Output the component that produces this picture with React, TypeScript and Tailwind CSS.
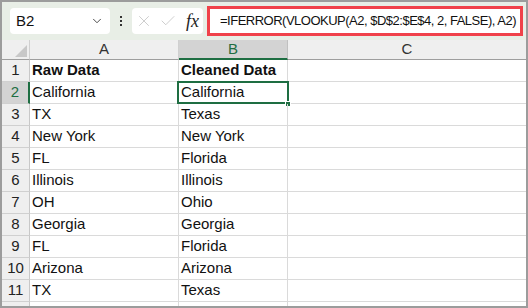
import { ChevronDown, X, Check } from 'lucide-react';

const rows = [
  ['Raw Data', 'Cleaned Data'],
  ['California', 'California'],
  ['TX', 'Texas'],
  ['New York', 'New York'],
  ['FL', 'Florida'],
  ['Illinois', 'Illinois'],
  ['OH', 'Ohio'],
  ['Georgia', 'Georgia'],
  ['FL', 'Florida'],
  ['Arizona', 'Arizona'],
  ['TX', 'Texas'],
  ['', ''],
];

const App = () => {
  return (
    <div
      className="w-[528px] h-[308px] overflow-hidden border-2 border-[#9c9c9c] bg-white text-[#111]"
      style={{ fontFamily: '"Liberation Sans", Arial, sans-serif' }}
    >
      {/* Formula bar */}
      <div className="h-[38px] bg-[#e8eee6] flex items-center pl-2 pr-[3px]">
        <div className="w-[100px] shrink-0 h-[26px] bg-white rounded-[4px] flex items-center justify-between pl-[6px] pr-[6px] text-[15px]">
          <span>B2</span>
          <ChevronDown size={14} strokeWidth={1.5} className="text-[#333]" />
        </div>
        <div className="w-[22px] shrink-0 flex flex-col items-center gap-[2px]">
          <span className="w-[2px] h-[2px] bg-[#333]" />
          <span className="w-[2px] h-[2px] bg-[#333]" />
          <span className="w-[2px] h-[2px] bg-[#333]" />
        </div>
        <div className="w-[71px] shrink-0 h-[26px] bg-white rounded-[4px] flex items-center pl-[3px] pr-[4px]">
          <X size={18} strokeWidth={1.1} className="text-[#c4c4c4]" />
          <Check size={18} strokeWidth={1.1} className="text-[#c4c4c4] ml-[6px]" />
          <span
            className="ml-auto text-[18px] italic text-[#222] leading-none"
            style={{ fontFamily: '"Liberation Serif", "Times New Roman", serif' }}
          >
            fx
          </span>
        </div>
        <div className="ml-[4px] flex-1 min-w-0 h-[30px] border-[3px] border-[#f0424a] bg-white flex items-center pl-[10px] whitespace-nowrap overflow-hidden text-[13px] tracking-[-0.5px]">
          =IFERROR(VLOOKUP(A2, $D$2:$E$4, 2, FALSE), A2)
        </div>
      </div>

      {/* Grid */}
      <div className="grid grid-cols-[28px_149px_109px_1fr] text-[15px]">
        {/* header row */}
        <div className="h-[20px] bg-[#efefef] border-r border-[#d0d0d0] border-b border-b-[#9e9e9e] relative">
          <div className="absolute right-[2px] bottom-[2px] w-0 h-0 border-l-[12px] border-l-transparent border-b-[12px] border-b-[#c8c8c8]" />
        </div>
        <div className="h-[20px] bg-[#efefef] border-r border-[#d0d0d0] border-b border-b-[#9e9e9e] flex items-center justify-center text-[#333]">
          A
        </div>
        <div className="h-[20px] bg-[#d3d3d3] border-r border-[#c0c0c0] border-b-2 border-b-[#1e6e42] flex items-center justify-center text-[#1e6e42]">
          B
        </div>
        <div className="h-[20px] bg-[#efefef] border-b border-b-[#9e9e9e] flex items-center justify-center text-[#333]">
          C
        </div>

        {rows.map((r, i) => {
          const n = i + 1;
          const sel = n === 2;
          return [
            <div
              key={`h${n}`}
              className={`h-[22px] flex items-center justify-center border-b border-[#d0d0d0] ${
                sel
                  ? 'bg-[#d3d3d3] text-[#1e6e42] border-r-2 border-r-[#1e6e42]'
                  : 'bg-[#efefef] text-[#222] border-r border-r-[#c8c8c8]'
              }`}
            >
              {n < 12 ? n : ''}
            </div>,
            <div
              key={`a${n}`}
              className={`h-[22px] flex items-center pl-[2px] border-b border-r border-[#dadada] ${n === 1 ? 'font-bold' : ''}`}
            >
              {r[0]}
            </div>,
            <div
              key={`b${n}`}
              className={`h-[22px] flex items-center pl-[2px] border-b border-r border-[#dadada] relative ${n === 1 ? 'font-bold' : ''}`}
            >
              {sel && (
                <>
                  <div className="absolute -left-[2px] -top-[1px] right-[-2px] bottom-[-1px] border-2 border-[#1e6e42]" />
                  <div className="absolute right-[-4px] bottom-[-4px] w-[6px] h-[6px] bg-[#1e6e42] border border-white" />
                </>
              )}
              {r[1]}
            </div>,
            <div key={`c${n}`} className="h-[22px] border-b border-[#dadada]" />,
          ];
        })}
      </div>
    </div>
  );
};

export default App;
